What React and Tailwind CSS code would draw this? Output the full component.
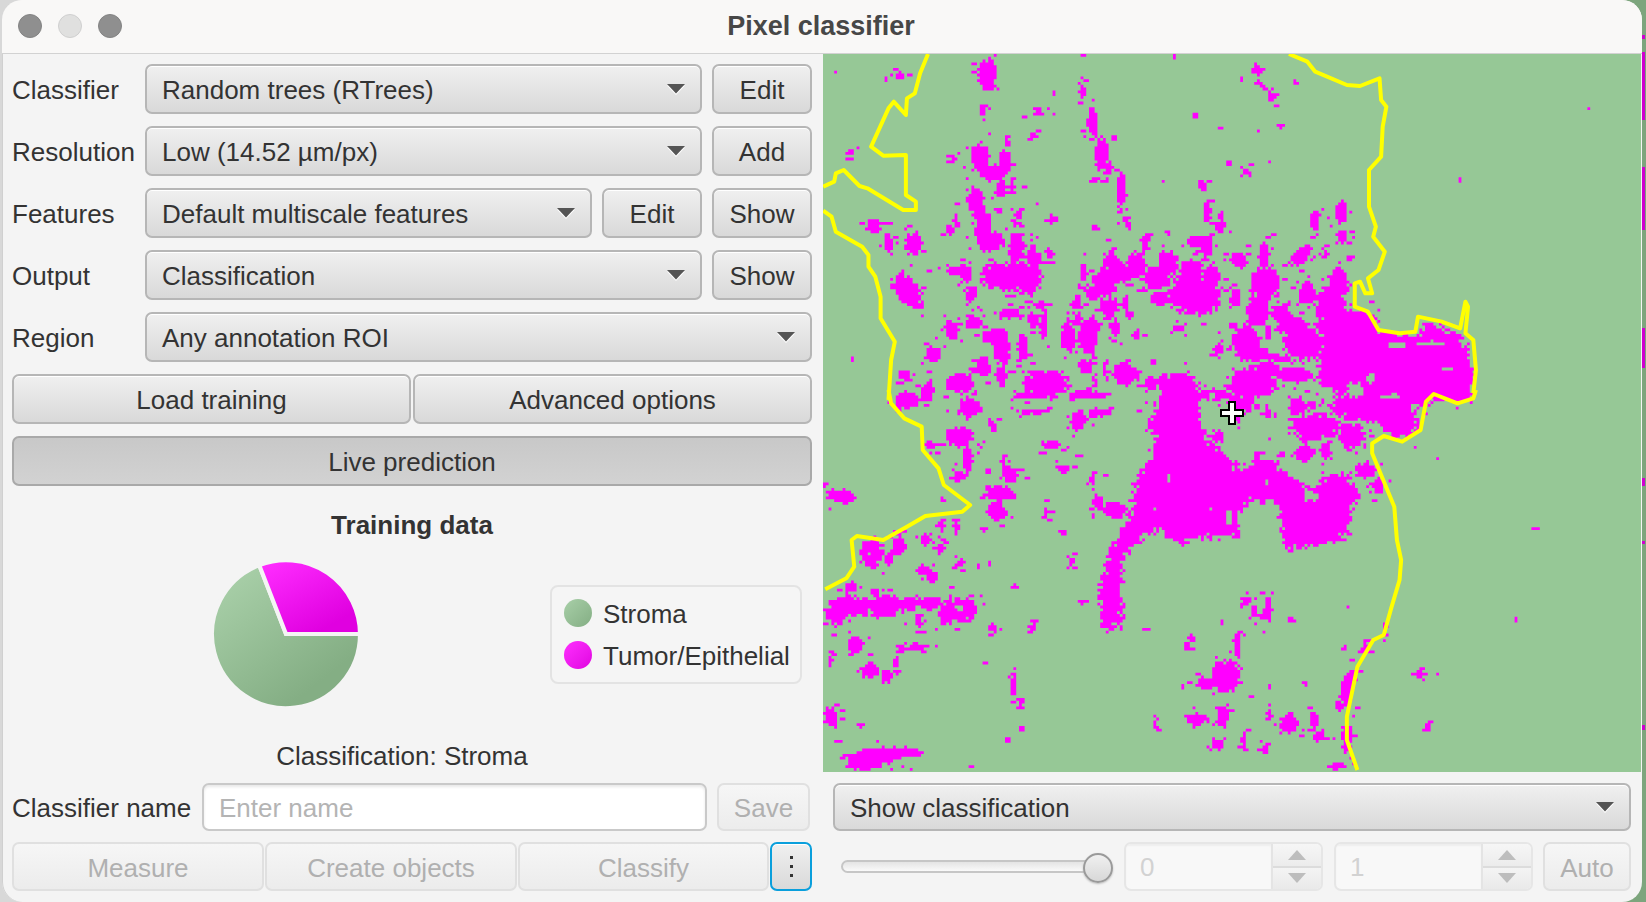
import React, { useMemo } from "react";

// map drawing: blobs are read off the 1.898 x 3 zoom crops, [x, y, rx, ry, rot]
const upperBlobs = [
  [318,75,18,50],[150,78,8,12],[125,88,5,5],[28,65,3,6],[310,185,5,14],[445,128,5,9],[498,125,6,22],[500,18,4,6],[673,20,3,8],
  [828,60,11,12],[903,98,6,9],[800,88,4,6],[832,97,3,12],[845,118,5,10],[858,140,6,14],[386,200,5,8],[415,185,20,7,55],
  [404,257,8,12],[355,276,4,12],[60,305,6,12],[253,322,6,12],[713,195,6,10],[875,230,6,8],[760,235,4,6],[831,245,3,6],
  [517,215,10,45],[535,310,14,50],[548,355,8,20],[778,338,6,9],[817,342,5,6],[808,365,6,12],[853,335,2,6],[520,392,15,6,-40],
  [650,392,5,3],[728,410,6,15],[572,420,9,60],[305,325,17,45],[352,335,13,35],[325,370,25,22],[345,420,10,30],[295,455,18,40],
  [387,410,6,8],[365,405,6,14],[338,480,8,10],[375,495,6,15],[258,500,6,10],[445,507,12,9],[373,520,8,3],[412,462,4,6],
  [102,530,15,25],[130,580,9,25],[178,585,16,40],[248,540,10,18],[310,540,16,70],[330,575,18,30],[372,590,15,40],[405,625,12,40],
  [360,680,55,45],[260,660,20,14],[278,675,10,25],[395,690,25,50],[165,720,25,55,-15],[188,765,8,10],[287,733,11,25],[435,610,6,18],
  [523,535,6,10],[585,527,7,14],[617,575,8,28],[660,548,5,10],[735,490,8,30],[760,530,12,20],[720,575,28,18],[735,600,10,25],
  [795,630,15,25],[843,620,10,45],[845,700,28,55],[830,780,22,50],[940,510,9,30],[990,485,12,32],[990,560,12,20],[915,615,15,35,30],
  [960,613,6,12],[1007,622,8,9],[985,657,7,9],[925,725,18,35],[985,700,22,40],[970,770,30,50],[1155,650,4,3],[1215,390,2,6],[1458,173,2,6],
  [555,640,15,35],[600,645,18,40],[540,700,22,50],[565,670,35,30],[660,640,20,40],[640,685,25,35],[705,660,22,35],[710,735,55,60],
  [745,680,15,40],[645,745,18,22],[790,745,10,28],[500,665,8,30],[520,730,20,20],[485,760,9,18],[420,765,18,10],[550,770,20,30],
  [580,760,5,30],[360,790,22,15],[405,810,12,25],[425,830,8,40],[290,815,15,25],[250,840,15,30],[325,860,18,25],[345,890,15,60],
  [385,890,10,40],[215,915,15,25],[470,860,14,45],[510,860,20,60],[490,810,8,18],[560,835,10,28],[603,855,6,14],[680,835,12,12],
  [782,825,10,8],[757,895,10,18],[810,880,28,55],[830,910,20,25],[850,840,8,15],[870,925,30,10,20],[900,830,30,30],[880,800,20,40,-20],
  [920,880,40,50],[985,830,40,70],[1020,830,40,50],[900,975,40,25],[820,1000,50,50],[850,960,25,30],[680,1010,40,45],[628,995,10,18],
  [580,975,25,35],[505,950,15,22],[540,955,5,20],[430,1000,45,40],[415,975,10,15],[310,950,15,30],[345,975,10,30],[265,1000,28,30],
  [205,1020,12,30],[160,975,10,20],[165,1040,25,10],[635,938,6,10],[522,992,7,8],[60,930,3,8],[92,842,4,3],[205,827,5,4],
];

const lowerBlobs = [
  [790,50,15,50],[850,70,8,15],[905,50,18,30],[935,45,8,15],[940,110,50,40],[1010,140,25,40],[1050,50,80,50],[1100,100,35,45],
  [1010,40,40,20],[1220,20,20,20],[1130,20,40,30],[920,190,20,25],[960,180,10,25],[830,200,7,14],[875,195,8,10],[1035,240,20,25],
  [1060,290,12,25],[1085,340,3,10],[755,140,10,15],[730,125,7,8],[165,35,25,20],[285,50,22,30],[400,65,25,8],[490,90,15,30],
  [530,70,25,12],[510,15,40,12],[400,15,35,12],[210,165,12,14],[265,140,28,30],[280,210,10,40],[330,110,6,18],[440,165,20,15],
  [490,197,8,6],[350,215,3,12],[320,243,7,8],[362,255,15,28],[262,260,10,18],[463,235,9,12],[518,270,6,18],[543,255,4,6],
  [340,310,28,25],[335,365,20,30],[232,330,6,10],[430,365,4,18],[528,340,12,22],[560,360,22,28,-40],[230,405,6,15],[258,410,6,15],
  [312,417,7,8],[460,428,8,8],[200,450,10,18],[228,475,9,18],[150,470,12,28],[98,490,24,40],[130,510,10,20],[267,520,8,12],
  [322,523,4,8],[300,530,4,8],[478,515,6,12],[40,318,30,20],[10,282,5,10],[198,540,14,18],[215,565,12,12],[250,592,7,7],
  [370,590,6,8],[500,635,9,10],[60,650,50,30],[30,670,20,35],[120,650,40,35],[170,640,20,20],[265,660,35,35],[210,640,25,20],
  [240,680,15,25],[190,690,10,25],[60,590,10,15],[105,610,8,15],[327,712,7,12],[405,712,6,12],[65,765,15,25],[190,770,20,10],
  [155,775,5,12],[95,840,15,25],[128,855,12,15],[145,820,5,15],[20,810,5,12],[315,820,6,6],[367,890,7,28],[380,935,6,15],
  [20,980,14,30],[75,1005,8,8],[383,1017,5,8],[355,1052,7,9],[35,1053,7,7],[115,1095,70,22,-8],[85,1120,40,20],[290,1130,6,8],
  [165,1090,30,15],[808,630,10,14],[850,660,9,35],[825,665,6,20],[893,692,8,9],[763,698,5,8],[705,745,6,10],[698,765,5,12],
  [620,720,6,6],[570,715,5,9],[793,770,6,45],[770,860,30,50],[735,880,20,20],[690,888,5,10],[920,882,3,10],[853,890,2,10],
  [715,988,22,18],[765,978,12,28],[890,1000,16,30],[938,990,10,25],[853,972,3,14],[637,1000,4,12],[755,1065,12,14],[805,1050,7,22],
  [845,1075,7,14],[945,1040,14,14],[1000,1040,12,40],[1000,900,10,50],[1010,850,6,15],[985,950,12,12],[1035,770,6,20],[993,773,5,6],
  [1153,1006,6,12],[1140,852,15,10],[1320,690,4,6],[1358,415,8,8],[1171,203,4,6],[985,1125,15,8],[1000,650,2,10],[1070,720,3,20],
  [745,15,30,18],[812,40,10,30],[680,60,40,40],[690,120,30,30],
];

const rightMass = [[960,790],[1030,790],[1060,850],[1130,855],[1150,820],[1215,850],[1240,950],[1235,1050],[1000,1050],[940,990]];
const rightHoles = [[1095,885,18,10],[1045,985,10,15],[1015,1020,15,25],[1160,880,25,8],[1190,960,14,6],[1085,1040,20,8]];

const centerMass = [
  [650,0],[720,0],[718,120],[760,180],[790,230],[850,210],[920,280],[930,330],[960,250],[1000,255],[1025,310],[1005,370],[1005,440],
  [960,460],[880,480],[870,340],[820,330],[790,380],[800,440],[740,440],[680,460],[640,420],[600,460],[570,520],[570,595],[575,690],
  [540,720],[530,600],[540,540],[570,420],[590,380],[600,260],[630,200],[640,130],[620,120],
];
const centerHoles = [
  [935,320,12,14],[662,265,2,14],[95,665,4,10],[150,680,8,12],[265,655,8,10],[195,680,5,15],[95,490,4,6],
  [745,15,6,8],[730,30,4,5],[850,275,3,8],[775,385,6,22],[830,385,5,12],[740,360,3,5],[635,355,3,5],
];

const lineA = [[205,12],[190,70],[180,130],[165,145],[163,195],[140,155],[130,175],[97,290],[120,317],[163,315],[163,435],[182,455],[182,480],[158,480],[90,415],[75,408],[45,360],[30,370],[27,395],[6,410]];
const lineB = [[6,482],[22,500],[30,545],[80,590],[92,615],[92,650],[105,680],[115,740],[115,805],[142,875],[135,930],[130,1050]];
const lineBLower = [[130,0],[135,40],[160,85],[193,110],[195,180],[225,235],[235,285],[285,345],[270,365],[200,378],[165,410],[120,450],[70,438],[60,450],[65,530],[50,565],[10,598]];
const lineC = [[890,12],[925,35],[940,65],[1000,105],[1025,108],[1062,85],[1065,150],[1075,170],[1068,230],[1065,320],[1042,360],[1042,470],[1055,530],[1050,560],[1072,605],[1060,660],[1040,685],[1048,730],[1035,730],[1025,695],[1015,700],[1015,770],[1040,785],[1060,840],[1100,850],[1130,845],[1135,800],[1180,815],[1215,835],[1225,755],[1230,770],[1225,850],[1240,870],[1245,960],[1240,1030]];
const lineCLower = [[1245,0],[1240,25],[1210,40],[1165,12],[1150,35],[1140,120],[1105,155],[1070,138],[1048,160],[1048,190],[1090,350],[1095,450],[1103,510],[1100,570],[1085,650],[1070,735],[1050,750],[1020,830],[1000,980],[1000,1050],[1020,1140]];

const upperPt = ([x, y]) => [820 + x / 1.898, 50 + y / 3];
const lowerPt = ([x, y]) => [820 + x / 1.898, 390 + y / 3];
const toPoints = (pts, conv) => pts.map((p) => conv(p).join(",")).join(" ");

const CELL = 2.8;
const noise = (i, j) => {
  const s = Math.sin(i * 127.1 + j * 311.7) * 43758.5453;
  return s - Math.floor(s);
};

const inPoly = (x, y, poly) => {
  let inside = false;
  for (let a = 0, b = poly.length - 1; a < poly.length; b = a++) {
    const [xa, ya] = poly[a];
    const [xb, yb] = poly[b];
    if (ya > y !== yb > y && x < ((xb - xa) * (y - ya)) / (yb - ya) + xa) inside = !inside;
  }
  return inside;
};

const buildCells = () => {
  const cols = Math.ceil(818 / CELL);
  const rows = Math.ceil(718 / CELL);
  const grid = new Uint8Array(cols * rows);
  const paint = (blobs, conv, value) => {
    blobs.forEach(([x, y, rx, ry, rot = 0]) => {
      const [cx, cy] = conv([x, y]);
      const ext = Math.max(rx, ry) * 1.4;
      const i0 = Math.floor((cx - 823 - ext / 1.898) / CELL) - 1;
      const i1 = Math.ceil((cx - 823 + ext / 1.898) / CELL) + 1;
      const j0 = Math.floor((cy - 54 - ext / 3) / CELL) - 1;
      const j1 = Math.ceil((cy - 54 + ext / 3) / CELL) + 1;
      const t = (rot * Math.PI) / 180;
      for (let j = Math.max(j0, 0); j <= Math.min(j1, rows - 1); j++) {
        for (let i = Math.max(i0, 0); i <= Math.min(i1, cols - 1); i++) {
          const dx = ((i + 0.5) * CELL + 823 - cx) * 1.898;
          const dy = ((j + 0.5) * CELL + 54 - cy) * 3;
          const u = dx * Math.cos(t) + dy * Math.sin(t);
          const v = -dx * Math.sin(t) + dy * Math.cos(t);
          const d = (u * u) / (rx * rx) + (v * v) / (ry * ry);
          if (d < 0.55 + 0.75 * noise(i, j)) grid[j * cols + i] = value;
        }
      }
    });
  };
  const fill = (poly, conv) => {
    const pts = poly.map(conv);
    for (let j = 0; j < rows; j++) {
      for (let i = 0; i < cols; i++) {
        // jitter the test point so the edges of the big masses stay rough
        const x = (i + 0.5) * CELL + 823 + (noise(i, j) - 0.5) * 9;
        const y = (j + 0.5) * CELL + 54 + (noise(j, i) - 0.5) * 9;
        if (inPoly(x, y, pts)) grid[j * cols + i] = 1;
      }
    }
  };
  paint(upperBlobs, upperPt, 1);
  paint(lowerBlobs, lowerPt, 1);
  fill(rightMass, upperPt);
  fill(centerMass, lowerPt);
  paint(rightHoles, upperPt, 0);
  paint(centerHoles, lowerPt, 0);

  // loose specks hanging around the bigger blobs
  const scatter = (blobs, conv, seed) => {
    blobs.forEach(([x, y, rx, ry], n) => {
      if (Math.max(rx, ry) < 12) return;
      for (let k = 0; k < 4; k++) {
        const a = noise(n + seed, k) * Math.PI * 2;
        const r = 1.15 + noise(k + seed, n) * 0.9;
        const [px, py] = conv([x + Math.cos(a) * rx * r, y + Math.sin(a) * ry * r]);
        const i = Math.floor((px - 823) / CELL);
        const j = Math.floor((py - 54) / CELL);
        if (i < 0 || j < 0 || i >= cols - 1 || j >= rows) continue;
        grid[j * cols + i] = 1;
        if (noise(n, k + seed) > 0.6) grid[j * cols + i + 1] = 1;
      }
    });
  };
  scatter(upperBlobs, upperPt, 5);
  scatter(lowerBlobs, lowerPt, 9);

  let d = "";
  for (let j = 0; j < rows; j++) {
    let i = 0;
    while (i < cols) {
      if (!grid[j * cols + i]) {
        i++;
        continue;
      }
      const start = i;
      while (i < cols && grid[j * cols + i]) i++;
      const x = (823 + start * CELL).toFixed(1);
      const y = (54 + j * CELL).toFixed(1);
      const w = ((i - start) * CELL).toFixed(1);
      d += `M${x} ${y}h${w}v${CELL}h-${w}z`;
    }
  }
  return d;
};

const ClassMap = () => {
  const cells = useMemo(buildCells, []);
  const line = { fill: "none", stroke: "#ffff00", strokeWidth: 4, strokeLinejoin: "round" };
  return (
    <svg viewBox="823 54 818 718" className="block w-[818px] h-[718px] bg-[#96c896]">
      <path d={cells} fill="#ff00ff" />
      <polyline points={toPoints(lineA, upperPt)} {...line} />
      <polyline points={toPoints(lineB, upperPt)} {...line} />
      <polyline points={toPoints(lineBLower, lowerPt)} {...line} />
      <polyline points={toPoints(lineC, upperPt)} {...line} />
      <polyline points={toPoints(lineCLower, lowerPt)} {...line} />
      <path
        d="M1229 402h6v8h8v6h-8v8h-6v-8h-8v-6h8z"
        fill="#fff"
        stroke="#000"
        strokeWidth="2"
      />
    </svg>
  );
};

const Caret = () => (
  <svg viewBox="0 0 18 11" className="block w-[18px] h-[11px] shrink-0">
    <path d="M0 1.5h18l-9 9.5z" fill="#fff" />
    <path d="M0 0h18l-9 9.5z" fill="#555" />
  </svg>
);

const btnBase =
  "h-[50px] shrink-0 rounded-[7px] border-2 text-[26px] leading-none flex items-center justify-center";
const btnOn =
  "border-[#b6b6b6] bg-gradient-to-b from-[#f0f0f0] to-[#d9d9d9] text-[#333] shadow-[inset_0_1px_0_#fff]";
const btnOff =
  "border-[#e0e0e0] bg-gradient-to-b from-[#f6f6f6] to-[#ececec] text-[#b0b0b0]";

const Button = ({ children, className = "", disabled = false }) => (
  <button type="button" className={`${btnBase} ${disabled ? btnOff : btnOn} ${className}`}>
    <span className="pt-[2px]">{children}</span>
  </button>
);

const Combo = ({ children, className = "" }) => (
  <button
    type="button"
    className={`${btnBase} ${btnOn} !justify-between pl-[15px] pr-[15px] min-w-0 ${className}`}
  >
    <span className="pt-[2px]">{children}</span>
    <Caret />
  </button>
);

const Row = ({ label, children }) => (
  <div className="flex items-center gap-[10px] h-[50px]">
    <span className="w-[123px] shrink-0 text-[26px] text-[#333] leading-none pt-[2px]">{label}</span>
    {children}
  </div>
);

const Spinner = ({ value }) => (
  <div className="w-[199px] h-[49px] shrink-0 flex rounded-[7px] border-2 border-[#e6e6e6] bg-[#f8f8f8] overflow-hidden">
    <span className="flex-1 pl-[14px] text-[26px] leading-[47px] text-[#d2d2d2] shadow-[inset_0_2px_2px_#eee]">{value}</span>
    <div className="w-[50px] flex flex-col border-l-2 border-[#e4e4e4]">
      <div className="flex-1 flex items-center justify-center bg-gradient-to-b from-[#f6f6f6] to-[#ececec] border-b-2 border-[#dcdcdc]">
        <svg viewBox="0 0 18 10" className="block w-[18px] h-[10px]"><path d="M0 10h18L9 0z" fill="#bdbdbd" /></svg>
      </div>
      <div className="flex-1 flex items-center justify-center bg-gradient-to-b from-[#f4f4f4] to-[#e9e9e9]">
        <svg viewBox="0 0 18 10" className="block w-[18px] h-[10px]"><path d="M0 0h18L9 10z" fill="#bdbdbd" /></svg>
      </div>
    </div>
  </div>
);

const Pie = () => (
  <svg viewBox="0 0 144 144" className="block w-[148px] h-[148px] shrink-0">
    <defs>
      <linearGradient id="greenGrad" x1="0.15" y1="0.05" x2="0.75" y2="0.8">
        <stop offset="0" stopColor="#a8cfa8" />
        <stop offset="1" stopColor="#84ae84" />
      </linearGradient>
      <linearGradient id="magentaGrad" x1="0.1" y1="0" x2="0.75" y2="0.85">
        <stop offset="0" stopColor="#ff2dff" />
        <stop offset="1" stopColor="#e000e0" />
      </linearGradient>
    </defs>
    <path d="M72 72L46 5A72 72 0 1 0 144 72Z" fill="url(#greenGrad)" stroke="#f4f4f4" strokeWidth="4" />
    <path d="M72 72H144A72 72 0 0 0 46 5Z" fill="url(#magentaGrad)" stroke="#f4f4f4" strokeWidth="4" />
  </svg>
);

const LegendItem = ({ label, dot }) => (
  <div className="flex items-center gap-[11px]">
    <span className={`w-[28px] h-[28px] rounded-full bg-gradient-to-br ${dot}`} />
    <span className="text-[26px] leading-none text-[#333] pt-[2px]">{label}</span>
  </div>
);

const SLIVER_SPOTS = [[35, 4], [52, 68], [167, 63], [328, 40], [478, 8], [541, 3], [725, 5]];

export default function App() {
  return (
    <div
      className="w-[1646px] h-[902px] flex overflow-hidden pl-[2px] bg-[linear-gradient(90deg,#d8d8d8_0_30px,#7da57d_30px)]"
      style={{ fontFamily: '"Liberation Sans", Arial, sans-serif' }}
    >
      <div className="w-[1640px] h-full shrink-0 flex flex-col rounded-[20px] overflow-hidden bg-[#f4f4f4] shadow-[inset_1px_0_0_#d0d0d0]">
        {/* Title bar */}
        <div className="relative h-[54px] shrink-0 flex items-center justify-center bg-[#f9f8f7] border-b border-[#d2d2d2]">
          <div className="absolute left-[16px] top-[14px] flex gap-[16px]">
            <span className="w-[24px] h-[24px] rounded-full bg-[#8f8f8f] border border-[#838383]" />
            <span className="w-[24px] h-[24px] rounded-full bg-[#e0e0df] border border-[#cfcfcf]" />
            <span className="w-[24px] h-[24px] rounded-full bg-[#8f8f8f] border border-[#838383]" />
          </div>
          <span className="text-[27px] font-bold text-[#474747] leading-none ml-[-2px]">Pixel classifier</span>
        </div>

        <div className="flex-1 flex min-h-0">
          {/* Left panel */}
          <div className="w-[821px] shrink-0 flex flex-col pl-[10px] pr-[11px] pt-[10px]">
            <div className="flex flex-col gap-[12px]">
              <Row label="Classifier">
                <Combo className="flex-1">Random trees (RTrees)</Combo>
                <Button className="w-[100px]">Edit</Button>
              </Row>
              <Row label="Resolution">
                <Combo className="flex-1">Low (14.52 µm/px)</Combo>
                <Button className="w-[100px]">Add</Button>
              </Row>
              <Row label="Features">
                <Combo className="flex-1">Default multiscale features</Combo>
                <Button className="w-[100px]">Edit</Button>
                <Button className="w-[100px]">Show</Button>
              </Row>
              <Row label="Output">
                <Combo className="flex-1">Classification</Combo>
                <Button className="w-[100px]">Show</Button>
              </Row>
              <Row label="Region">
                <Combo className="flex-1">Any annotation ROI</Combo>
              </Row>
              <div className="flex gap-[2px]">
                <Button className="flex-1">Load training</Button>
                <Button className="flex-1">Advanced options</Button>
              </div>
              <button
                type="button"
                className={`${btnBase} border-[#a9a9a9] bg-gradient-to-b from-[#c8c8c8] to-[#d2d2d2] text-[#333]`}
              >
                <span className="pt-[2px]">Live prediction</span>
              </button>
            </div>

            <h2 className="mt-[24px] h-[30px] text-center text-[26px] leading-[30px] font-bold text-[#333]">
              Training data
            </h2>
            <div className="mt-[20px] pl-[200px] flex items-center gap-[190px]">
              <Pie />
              <div className="w-[252px] h-[99px] rounded-[8px] border-2 border-[#e3e3e3] bg-[#f5f5f5] pl-[12px] flex flex-col justify-center gap-[14px]">
                <LegendItem label="Stroma" dot="from-[#a8cfa8] to-[#84ae84]" />
                <LegendItem label="Tumor/Epithelial" dot="from-[#ff2dff] to-[#e000e0]" />
              </div>
            </div>
            <div className="mt-[33px] pr-[20px] h-[31px] text-center text-[26px] leading-[30px] text-[#333]">
              Classification: Stroma
            </div>

            <div className="mt-[11px] h-[48px] flex items-center gap-[10px]">
              <span className="text-[26px] leading-none text-[#333] w-[180px] shrink-0 whitespace-nowrap pt-[2px]">Classifier name</span>
              <input
                readOnly
                placeholder="Enter name"
                className="w-[505px] h-[48px] rounded-[7px] border-2 border-[#c9c9c9] bg-white pl-[15px] pt-[2px] text-[26px] outline-none placeholder:text-[#b4b4b4] shadow-[inset_0_2px_3px_#e8e8e8]"
              />
              <Button disabled className="w-[93px] !h-[48px]">Save</Button>
            </div>

            <div className="mt-[11px] flex">
              <Button disabled className="w-[252px] !h-[49px] mr-[1px]">Measure</Button>
              <Button disabled className="w-[252px] !h-[49px] mr-[1px]">Create objects</Button>
              <Button disabled className="w-[251px] !h-[49px] mr-[1px]">Classify</Button>
              <button
                type="button"
                className={`${btnBase} ${btnOn} w-[42px] !h-[49px] !border-[#0a9fdc] shadow-[0_0_0_1px_#cdeaf6]`}
              >
                <span className="flex flex-col gap-[6px]">
                  <span className="w-[3px] h-[3px] bg-[#333]" />
                  <span className="w-[3px] h-[3px] bg-[#333]" />
                  <span className="w-[3px] h-[3px] bg-[#333]" />
                </span>
              </button>
            </div>
          </div>

          {/* Right panel */}
          <div className="flex-1 flex flex-col min-w-0">
            <ClassMap />
            <div className="mt-[11px] pl-[10px] pr-[11px]">
              <Combo className="w-full !h-[48px]">Show classification</Combo>
            </div>
            <div className="mt-[11px] pl-[18px] flex items-center">
              <div className="relative w-[257px] h-[13px] mr-[26px] shrink-0 rounded-full border-2 border-[#c6c6c6] bg-gradient-to-b from-[#e4e4e4] to-[#fafafa]">
                <span className="absolute right-[-17px] top-[-9px] w-[30px] h-[30px] rounded-full border-2 border-[#9a9a9a] bg-gradient-to-b from-[#f0f0f0] to-[#d8d8d8] shadow-[0_1px_2px_#bbb]" />
              </div>
              <Spinner value="0" />
              <div className="w-[11px] shrink-0" />
              <Spinner value="1" />
              <div className="w-[10px] shrink-0" />
              <Button disabled className="w-[88px] !h-[49px]">Auto</Button>
            </div>
          </div>
        </div>
      </div>

      {/* desktop showing behind the window */}
      <div className="relative flex-1">
        {SLIVER_SPOTS.map(([top, h]) => (
          <span
            key={top}
            className="absolute left-0 w-[3px] bg-[#d000d0]"
            style={{ top: `${top}px`, height: `${h}px` }}
          />
        ))}
      </div>
    </div>
  );
}
